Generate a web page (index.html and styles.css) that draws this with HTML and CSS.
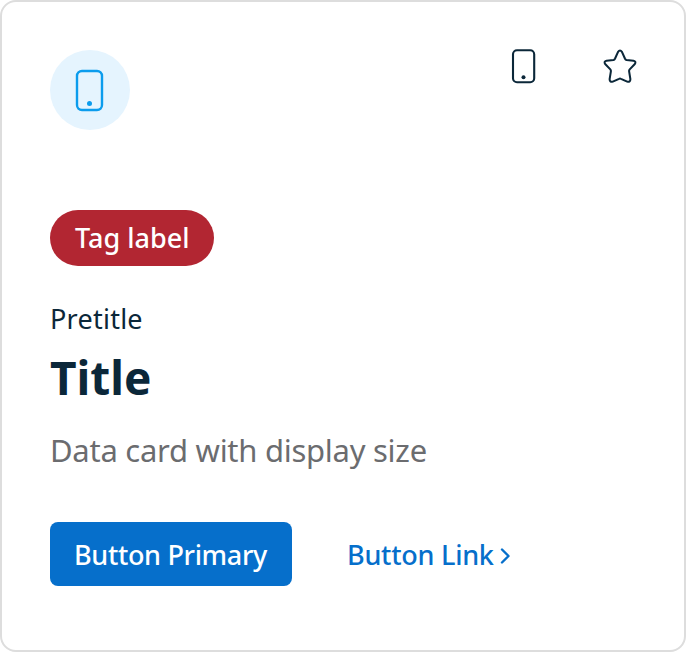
FILE: index.html
```html
<!DOCTYPE html>
<html lang="en">
<head>
<meta charset="utf-8">
<title>Data card</title>
<link rel="stylesheet" href="styles.css">
</head>
<body>
<article class="card">
  <header class="top">
    <div class="asset">
      <svg width="80" height="80" viewBox="0 0 80 80" fill="none"><rect x="27" y="21" width="25" height="39" rx="5" stroke="currentColor" stroke-width="2.4"/><circle cx="39.5" cy="53.5" r="2.5" fill="currentColor"/></svg>
    </div>
    <div class="actions">
      <svg width="48" height="48" viewBox="0 0 48 48" fill="none"><rect x="13" y="8.3" width="21.2" height="32" rx="4" stroke="currentColor" stroke-width="2.1"/><circle cx="23.5" cy="35.2" r="2" fill="currentColor"/></svg>
      <svg width="48" height="48" viewBox="0 0 48 48" fill="none"><path transform="translate(.72 .72) scale(.97)" d="M22 9.4Q24 6.6 26 9.4L29.2 16.5Q29.7 17.5 30.8 17.7L37.9 18.5Q41 19.2 39.3 22L34 27.5Q33.2 28.4 33.4 29.5L34.7 37.6Q34.7 40.9 31.4 40.1L25 37.2Q24 36.7 23 37.2L16.6 40.1Q13.3 40.9 13.3 37.6L14.6 29.5Q14.8 28.4 14 27.5L8.7 22Q7 19.2 10.1 18.5L17.2 17.7Q18.3 17.5 18.8 16.5Z" stroke="currentColor" stroke-width="2.1" stroke-linejoin="round"/></svg>
    </div>
  </header>
  <div class="tag"><span>Tag label</span></div>
  <div class="pretitle">Pretitle</div>
  <h2 class="title">Title</h2>
  <p class="description">Data card with display size</p>
  <footer class="buttons">
    <button class="primary">Button Primary</button>
    <a class="link"><span>Button Link</span><svg class="chevron" width="12" height="20" viewBox="0 0 12 20" fill="none"><path d="M2 3.5L8.5 10L2 16.5" stroke="currentColor" stroke-width="2.4" stroke-linecap="round" stroke-linejoin="round"/></svg></a>
  </footer>
</article>
</body>
</html>
```
FILE: styles.css
```css
* { box-sizing: border-box; }
body {
  margin: 0;
  background: #fff;
  font-family: "Noto Sans", sans-serif;
  color: #0b2739;
}
.card {
  display: flex;
  flex-direction: column;
  align-items: flex-start;
  width: 686px;
  height: 652px;
  padding: 48px;
  border: 2px solid #ddd;
  border-radius: 16px;
  background: #fff;
}
.top {
  display: flex;
  justify-content: space-between;
  width: 100%;
  height: 80px;
}
.asset {
  width: 80px;
  height: 80px;
  border-radius: 50%;
  background: #e5f4fe;
  color: #0b9ced;
}
.actions {
  display: flex;
  gap: 48px;
  margin: -8px -8px 0 0;
}
svg { display: block; flex: none; }
.tag {
  display: flex;
  align-items: center;
  width: 164px;
  height: 56px;
  margin-top: 80px;
  padding: 0 25px 1px;
  border-radius: 28px;
  background: #b22632;
  color: #fff;
  font-size: 27px;
  font-weight: 500;
  white-space: nowrap;
}
.pretitle {
  margin-top: 33px;
  font-size: 27px;
  line-height: 40px;
  letter-spacing: .25px;
}
.title {
  margin: 10px 0 0;
  font-size: 46px;
  line-height: 56px;
}
.description {
  margin: 21px 0 0;
  color: #6b6c6f;
  font-size: 31px;
  line-height: 48px;
  letter-spacing: -.27px;
  white-space: nowrap;
}
.buttons {
  display: flex;
  align-items: center;
  gap: 55px;
  margin-top: 48px;
}
.primary {
  width: 242px;
  height: 64px;
  padding: 0 0 0 24px;
  border: 0;
  border-radius: 8px;
  background: #066fcb;
  color: #fff;
  font: 500 27px "Noto Sans", sans-serif;
  letter-spacing: -.33px;
  text-align: left;
  white-space: nowrap;
}
.link {
  display: flex;
  align-items: center;
  gap: 6px;
  color: #066fcb;
  font-size: 27px;
  font-weight: 500;
  letter-spacing: -.25px;
  white-space: nowrap;
}
.chevron { margin-top: 3px; }
```
